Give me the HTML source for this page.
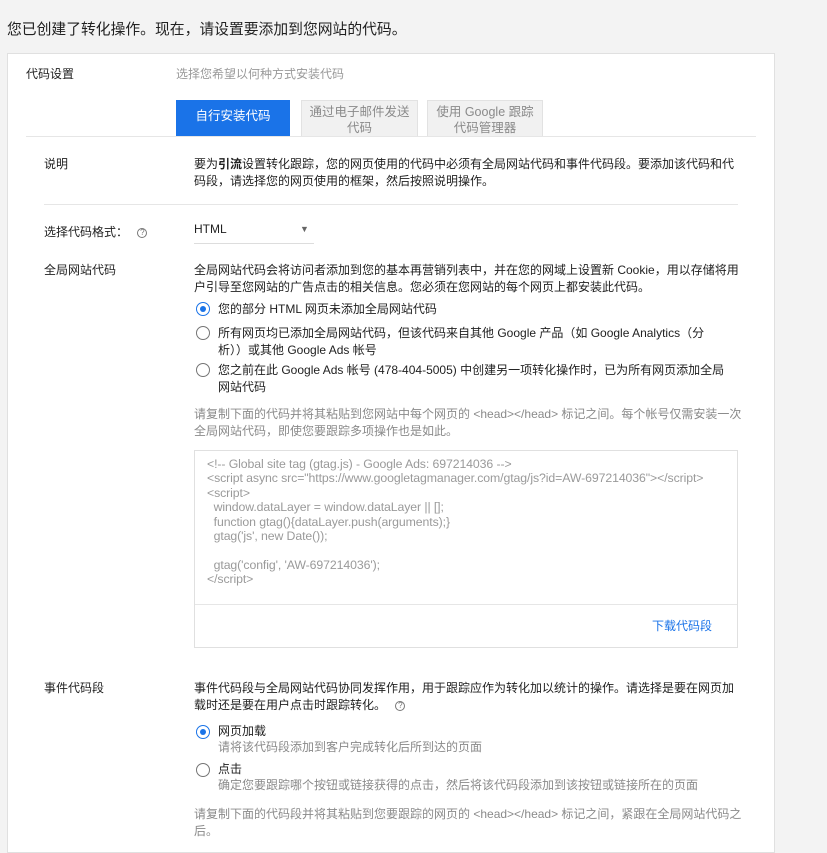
<!DOCTYPE html>
<html><head><meta charset="utf-8"><style>
*{margin:0;padding:0;box-sizing:border-box}
body{width:827px;height:834px;overflow:hidden;background:#f3f3f3;font-family:"Liberation Sans","Noto Sans CJK SC",sans-serif;color:#212121;position:relative;font-size:12px}
.a{position:absolute;white-space:nowrap;line-height:17px}
.g{color:#8a8a8a}
.card{position:absolute;left:7px;top:53px;width:768px;height:800px;background:#fff;border:1px solid #e0e0e0}
.tab{position:absolute;top:100px;height:37px;text-align:center;font-size:12.5px;line-height:16px;padding-top:3px;background:#f1f1f1;border:1px solid #e2e2e2;border-bottom:none;color:#8a8a8a}
.hr{position:absolute;height:1px;background:#e6e6e6}
.r{position:absolute;width:14px;height:14px;border:1.5px solid #757575;border-radius:50%}
.r.on{border-color:#1a73e8}
.r.on::after{content:"";position:absolute;left:2.5px;top:2.5px;width:6px;height:6px;border-radius:50%;background:#1a73e8}
.q{display:inline-block;width:10px;height:10px;border:1px solid #777;border-radius:50%;font-size:8px;line-height:8px;text-align:center;color:#777;vertical-align:middle}
.code{position:absolute;left:194px;top:450px;width:544px;height:198px;border:1px solid #e0e0e0}
.code pre{position:absolute;left:12px;top:6px;font-family:"Liberation Sans",sans-serif;font-size:12.3px;line-height:14.4px;color:#9a9a9a;letter-spacing:-0.1px}
</style></head><body>
<div class="a" style="left:7px;top:20px;font-size:14.8px;line-height:20px">您已创建了转化操作。现在，请设置要添加到您网站的代码。</div>
<div class="card"></div>
<div class="a" style="left:26px;top:66px">代码设置</div>
<div class="a g" style="left:176px;top:66px;color:#999">选择您希望以何种方式安装代码</div>
<div class="tab" style="left:176px;width:114px;background:#1a73e8;border-color:#1a73e8;color:#fff;padding-top:7px">自行安装代码</div>
<div class="tab" style="left:301px;width:117px">通过电子邮件发送<br>代码</div>
<div class="tab" style="left:427px;width:116px">使用 Google 跟踪<br>代码管理器</div>
<div class="hr" style="left:26px;top:136px;width:730px"></div>
<div class="a" style="left:44px;top:156px">说明</div>
<div class="a" style="left:194px;top:156px">要为<b>引流</b>设置转化跟踪，您的网页使用的代码中必须有全局网站代码和事件代码段。要添加该代码和代<br>码段，请选择您的网页使用的框架，然后按照说明操作。</div>
<div class="hr" style="left:44px;top:204px;width:694px"></div>
<div class="a" style="left:44px;top:224px">选择代码格式： <span class="q" style="margin-left:6px">?</span></div>
<div class="a" style="left:194px;top:221px">HTML</div>
<div class="a" style="left:300px;top:221px;color:#666;font-size:9px">▼</div>
<div class="hr" style="left:194px;top:243px;width:120px;background:#ddd"></div>
<div class="a" style="left:44px;top:262px">全局网站代码</div>
<div class="a" style="left:194px;top:262px">全局网站代码会将访问者添加到您的基本再营销列表中，并在您的网域上设置新 Cookie，用以存储将用<br>户引导至您网站的广告点击的相关信息。您必须在您网站的每个网页上都安装此代码。</div>
<div class="r on" style="left:196px;top:302px"></div>
<div class="a" style="left:218px;top:301px">您的部分 HTML 网页未添加全局网站代码</div>
<div class="r" style="left:196px;top:326px"></div>
<div class="a" style="left:218px;top:325px">所有网页均已添加全局网站代码，但该代码来自其他 Google 产品（如 Google Analytics（分<br>析））或其他 Google Ads 帐号</div>
<div class="r" style="left:196px;top:363px"></div>
<div class="a" style="left:218px;top:362px">您之前在此 Google Ads 帐号 (478-404-5005) 中创建另一项转化操作时，已为所有网页添加全局<br>网站代码</div>
<div class="a g" style="left:194px;top:406px">请复制下面的代码并将其粘贴到您网站中每个网页的 &lt;head&gt;&lt;/head&gt; 标记之间。每个帐号仅需安装一次<br>全局网站代码，即使您要跟踪多项操作也是如此。</div>
<div class="code"><pre>&lt;!-- Global site tag (gtag.js) - Google Ads: 697214036 --&gt;
&lt;script async src="https://www.googletagmanager.com/gtag/js?id=AW-697214036"&gt;&lt;/script&gt;
&lt;script&gt;
  window.dataLayer = window.dataLayer || [];
  function gtag(){dataLayer.push(arguments);}
  gtag('js', new Date());

  gtag('config', 'AW-697214036');
&lt;/script&gt;</pre>
<div class="hr" style="left:0;top:153px;width:542px"></div>
<div class="a" style="left:457px;top:167px;color:#1a73e8">下载代码段</div>
</div>
<div class="a" style="left:44px;top:680px">事件代码段</div>
<div class="a" style="left:194px;top:680px">事件代码段与全局网站代码协同发挥作用，用于跟踪应作为转化加以统计的操作。请选择是要在网页加<br>载时还是要在用户点击时跟踪转化。 <span class="q" style="margin-left:6px">?</span></div>
<div class="r on" style="left:196px;top:725px"></div>
<div class="a" style="left:218px;top:723px">网页加载</div>
<div class="a g" style="left:218px;top:739px">请将该代码段添加到客户完成转化后所到达的页面</div>
<div class="r" style="left:196px;top:763px"></div>
<div class="a" style="left:218px;top:761px">点击</div>
<div class="a g" style="left:218px;top:777px">确定您要跟踪哪个按钮或链接获得的点击，然后将该代码段添加到该按钮或链接所在的页面</div>
<div class="a g" style="left:194px;top:806px">请复制下面的代码段并将其粘贴到您要跟踪的网页的 &lt;head&gt;&lt;/head&gt; 标记之间，紧跟在全局网站代码之<br>后。</div>
</body></html>
